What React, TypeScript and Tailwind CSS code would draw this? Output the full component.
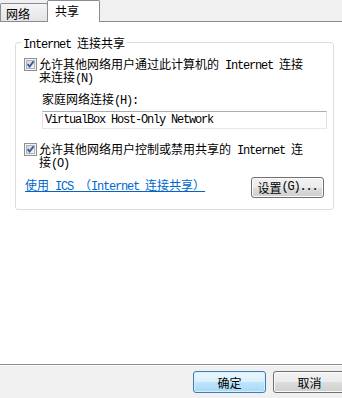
import React from "react";

const L = ({ children }: { children: React.ReactNode }) => (
  <span className="font-['Liberation_Mono',monospace] text-[12px] tracking-[-1.2px] whitespace-pre leading-[13px]">{children}</span>
);

const Ln = ({ children, className = "" }: { children: React.ReactNode; className?: string }) => (
  <div className={"h-[13px] leading-[13px] whitespace-nowrap overflow-visible " + className}>{children}</div>
);

const Check = () => (
  <svg width="13" height="13" viewBox="0 0 13 13" className="shrink-0">
    <defs>
      <linearGradient id="cbg" x1="0" y1="0" x2="1" y2="1">
        <stop offset="0" stopColor="#cdd1d7" />
        <stop offset="1" stopColor="#f8f8f8" />
      </linearGradient>
    </defs>
    <rect x="0.5" y="0.5" width="12" height="12" fill="#f4f4f4" stroke="#8e8f8f" />
    <rect x="2.5" y="2.5" width="8" height="8" fill="url(#cbg)" stroke="#b0b5bb" />
    <path d="M3.6 6.2 L5.6 8.6 L9.6 3.4" stroke="#3e5aa0" strokeWidth="1.9" fill="none" />
  </svg>
);

const btnNormal =
  "h-[22px] w-[73px] shrink-0 rounded-[3px] border border-[#707070] bg-[linear-gradient(to_bottom,#f2f2f2_0%,#ebebeb_50%,#dddddd_50%,#cfcfcf_100%)] shadow-[inset_0_0_0_1px_#fbfbfb] flex items-center justify-center leading-[13px] whitespace-nowrap";
const btnSmall =
  "h-[21px] w-[73px] shrink-0 rounded-[3px] border border-[#707070] bg-[linear-gradient(to_bottom,#f2f2f2_0%,#ebebeb_50%,#dddddd_50%,#cfcfcf_100%)] shadow-[inset_0_0_0_1px_#fbfbfb] flex items-center justify-center leading-[13px] whitespace-nowrap";
const btnDefault =
  "h-[22px] w-[73px] shrink-0 rounded-[3px] border border-[#3c7fb1] bg-[linear-gradient(to_bottom,#eaf6fd_0%,#d9f0fc_50%,#bee6fd_50%,#a7d9f5_100%)] shadow-[inset_0_0_0_1px_#d8effb] flex items-center justify-center leading-[13px]";

export default function App() {
  return (
    <div className="w-[342px] h-[398px] bg-[#f0f0f0] flex flex-col overflow-hidden font-['Noto_Sans_CJK_SC',sans-serif] text-[12px] text-black leading-[13px]">
      {/* Tabs */}
      <div className="flex items-end h-[21px] shrink-0">
        <div className="h-[18px] w-[48px] border border-b-0 border-[#898c95] rounded-t-[2px] bg-[linear-gradient(to_bottom,#f4f4f4,#e4e4e4)] pl-[5px] pt-[3px]">
          网络
        </div>
        <div className="relative z-10 -mb-px -ml-px h-[22px] w-[53px] border border-b-0 border-[#898c95] rounded-t-[2px] bg-white pl-[7px] pt-[3px]">
          共享
        </div>
      </div>

      {/* Panel */}
      <div className="h-[344px] shrink-0 bg-white border-t border-b border-[#898c95] pt-[14px]">
        <fieldset className="ml-[15px] w-[319px] border border-[#d5dfe5] rounded-[3px] pb-[11px]">
          <legend className="ml-[5px] px-[2px] h-[13px] leading-[13px] whitespace-nowrap">
            <L>Internet </L>连接共享
          </legend>

          <div className="flex items-start pl-[8px] mt-[8px]">
            <div className="mt-[1px]">
              <Check />
            </div>
            <div className="ml-[2px]">
              <Ln>
                允许其他网络用户通过此计算机的<L> Internet </L>连接
              </Ln>
              <Ln>
                来连接<L>(N)</L>
              </Ln>
            </div>
          </div>

          <Ln className="pl-[26px] mt-[9px]">
            家庭网络连接<L>(H):</L>
          </Ln>
          <div className="ml-[26px] mt-[6px] h-[18px] w-[285px] border border-[#abadb3] border-b-[#e3e9ef] border-r-[#dbdfe6] border-l-[#e2e3ea] flex items-center pl-[2px] whitespace-nowrap">
            <L>VirtualBox Host-Only Network</L>
          </div>

          <div className="flex items-start pl-[8px] mt-[13px]">
            <div className="mt-[1px]">
              <Check />
            </div>
            <div className="ml-[2px]">
              <Ln>
                允许其他网络用户控制或禁用共享的<L> Internet </L>连
              </Ln>
              <Ln>
                接<L>(O)</L>
              </Ln>
            </div>
          </div>

          <div className="flex items-start justify-between pl-[9px] pr-[9px] mt-[9px]">
            <Ln className="text-[#0066cc] underline underline-offset-[1px] mt-[1px]">
              使用<L> ICS </L>（<L>Internet </L>连接共享）
            </Ln>
            <div className={btnSmall}>
              设置<L>(G)...</L>
            </div>
          </div>
        </fieldset>
      </div>
      <div className="h-px bg-white shrink-0" />

      {/* Footer */}
      <div className="flex gap-[7px] pl-[193px] pt-[5px]">
        <div className={btnDefault}>确定</div>
        <div className={btnNormal}>取消</div>
      </div>
    </div>
  );
}
